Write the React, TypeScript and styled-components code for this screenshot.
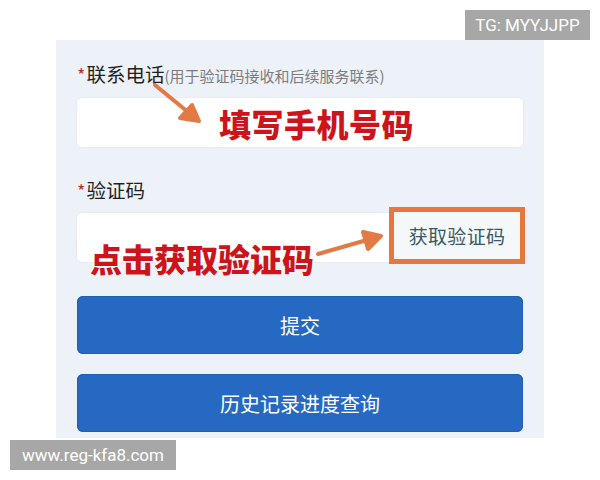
import React from 'react';
import styled, { createGlobalStyle } from 'styled-components';

const GlobalStyle = createGlobalStyle`
  html, body {
    margin: 0;
    padding: 0;
    background: #ffffff;
  }
  body {
    font-family: "Noto Sans CJK SC", "Noto Sans", "Liberation Sans", sans-serif;
  }
`;

const Page = styled.div`
  position: relative;
  width: 600px;
  height: 480px;
  padding: 40px 0 0 56px;
  box-sizing: border-box;
  overflow: hidden;
`;

const Panel = styled.div`
  position: relative;
  width: 488px;
  height: 398px;
  box-sizing: border-box;
  padding: 22px 21px 0 21px;
  background: #edf1f8;
  display: flex;
  flex-direction: column;
`;

const Label = styled.div<{ $gap: number }>`
  display: flex;
  align-items: baseline;
  height: 24px;
  line-height: 24px;
  margin-top: ${(p) => p.$gap}px;
  font-size: 19.5px;
  color: #1f1f1f;
`;

const Star = styled.span`
  color: #b8342f;
  font-size: 18px;
  margin-right: 1px;
`;

const Hint = styled.span`
  font-size: 15px;
  color: #7c7c7c;
`;

const Input = styled.div<{ $gap: number }>`
  display: flex;
  align-items: center;
  justify-content: space-between;
  height: 49px;
  margin-top: ${(p) => p.$gap}px;
  background: #ffffff;
  border-radius: 5px;
  box-shadow: 0 0 0 1px #e7ebf2;
`;

const BigRed = styled.span`
  font-size: 32px;
  line-height: 32px;
  font-weight: 900;
  color: #cc141a;
  letter-spacing: 0.5px;
  text-shadow: 0 0 2px #ffffff, 0 0 2px #ffffff;
  white-space: nowrap;
`;

const PhoneHint = styled(BigRed)`
  margin-left: 142px;
`;

const CodeHint = styled(BigRed)`
  position: absolute;
  left: 34px;
  top: 202px;
  letter-spacing: 0;
`;

const CodeButton = styled.div`
  align-self: stretch;
  margin: -6px -2px -2px 0;
  width: 136px;
  box-sizing: border-box;
  border: 5px solid #e8773f;
  background: #f5f8fa;
  display: flex;
  align-items: center;
  justify-content: center;
  font-size: 19px;
  color: #3b5862;
  letter-spacing: 0.3px;
`;

const Button = styled.div<{ $gap: number }>`
  height: 58px;
  margin-top: ${(p) => p.$gap}px;
  background: #2569c3;
  border-radius: 6px;
  box-shadow: inset 0 0 0 1px #1f60b4;
  color: #ffffff;
  font-size: 20px;
  display: flex;
  align-items: center;
  justify-content: center;
`;

const Arrows = styled.svg`
  position: absolute;
  left: 0;
  top: 0;
  width: 488px;
  height: 398px;
  pointer-events: none;
`;

const Badge = styled.div<{ $left: number; $top: number; $width: number }>`
  position: absolute;
  left: ${(p) => p.$left}px;
  top: ${(p) => p.$top}px;
  width: ${(p) => p.$width}px;
  height: 30px;
  background: #a7a7a7;
  color: #ffffff;
  font-family: "Roboto", "Liberation Sans", sans-serif;
  font-size: 17px;
  display: flex;
  align-items: center;
  justify-content: center;
`;

export default function App() {
  return (
    <>
      <GlobalStyle />
      <Page>
        <Panel>
          <Label $gap={0}>
            <Star>*</Star>联系电话<Hint>(用于验证码接收和后续服务联系)</Hint>
          </Label>
          <Input $gap={12}>
            <PhoneHint>填写手机号码</PhoneHint>
          </Input>
          <Label $gap={31}>
            <Star>*</Star>验证码
          </Label>
          <Input $gap={11}>
            <span />
            <CodeButton>获取验证码</CodeButton>
          </Input>
          <Button $gap={34}>提交</Button>
          <Button $gap={20}>历史记录进度查询</Button>

          <CodeHint>点击获取验证码</CodeHint>

          <Arrows viewBox="0 0 488 398">
            <g stroke="#e27a45" strokeWidth={4} strokeLinecap="round" strokeLinejoin="round" fill="#e27a45">
              <line x1={99} y1={45} x2={138} y2={77} />
              <polygon points="143,81 136,65 124,78" />
              <line x1={262} y1={214} x2={318} y2={198} />
              <polygon points="325,196 307,192 312,209" />
            </g>
          </Arrows>
        </Panel>
        <Badge $left={465} $top={10} $width={125}>TG: MYYJJPP</Badge>
        <Badge $left={10} $top={440} $width={166}>www.reg-kfa8.com</Badge>
      </Page>
    </>
  );
}
